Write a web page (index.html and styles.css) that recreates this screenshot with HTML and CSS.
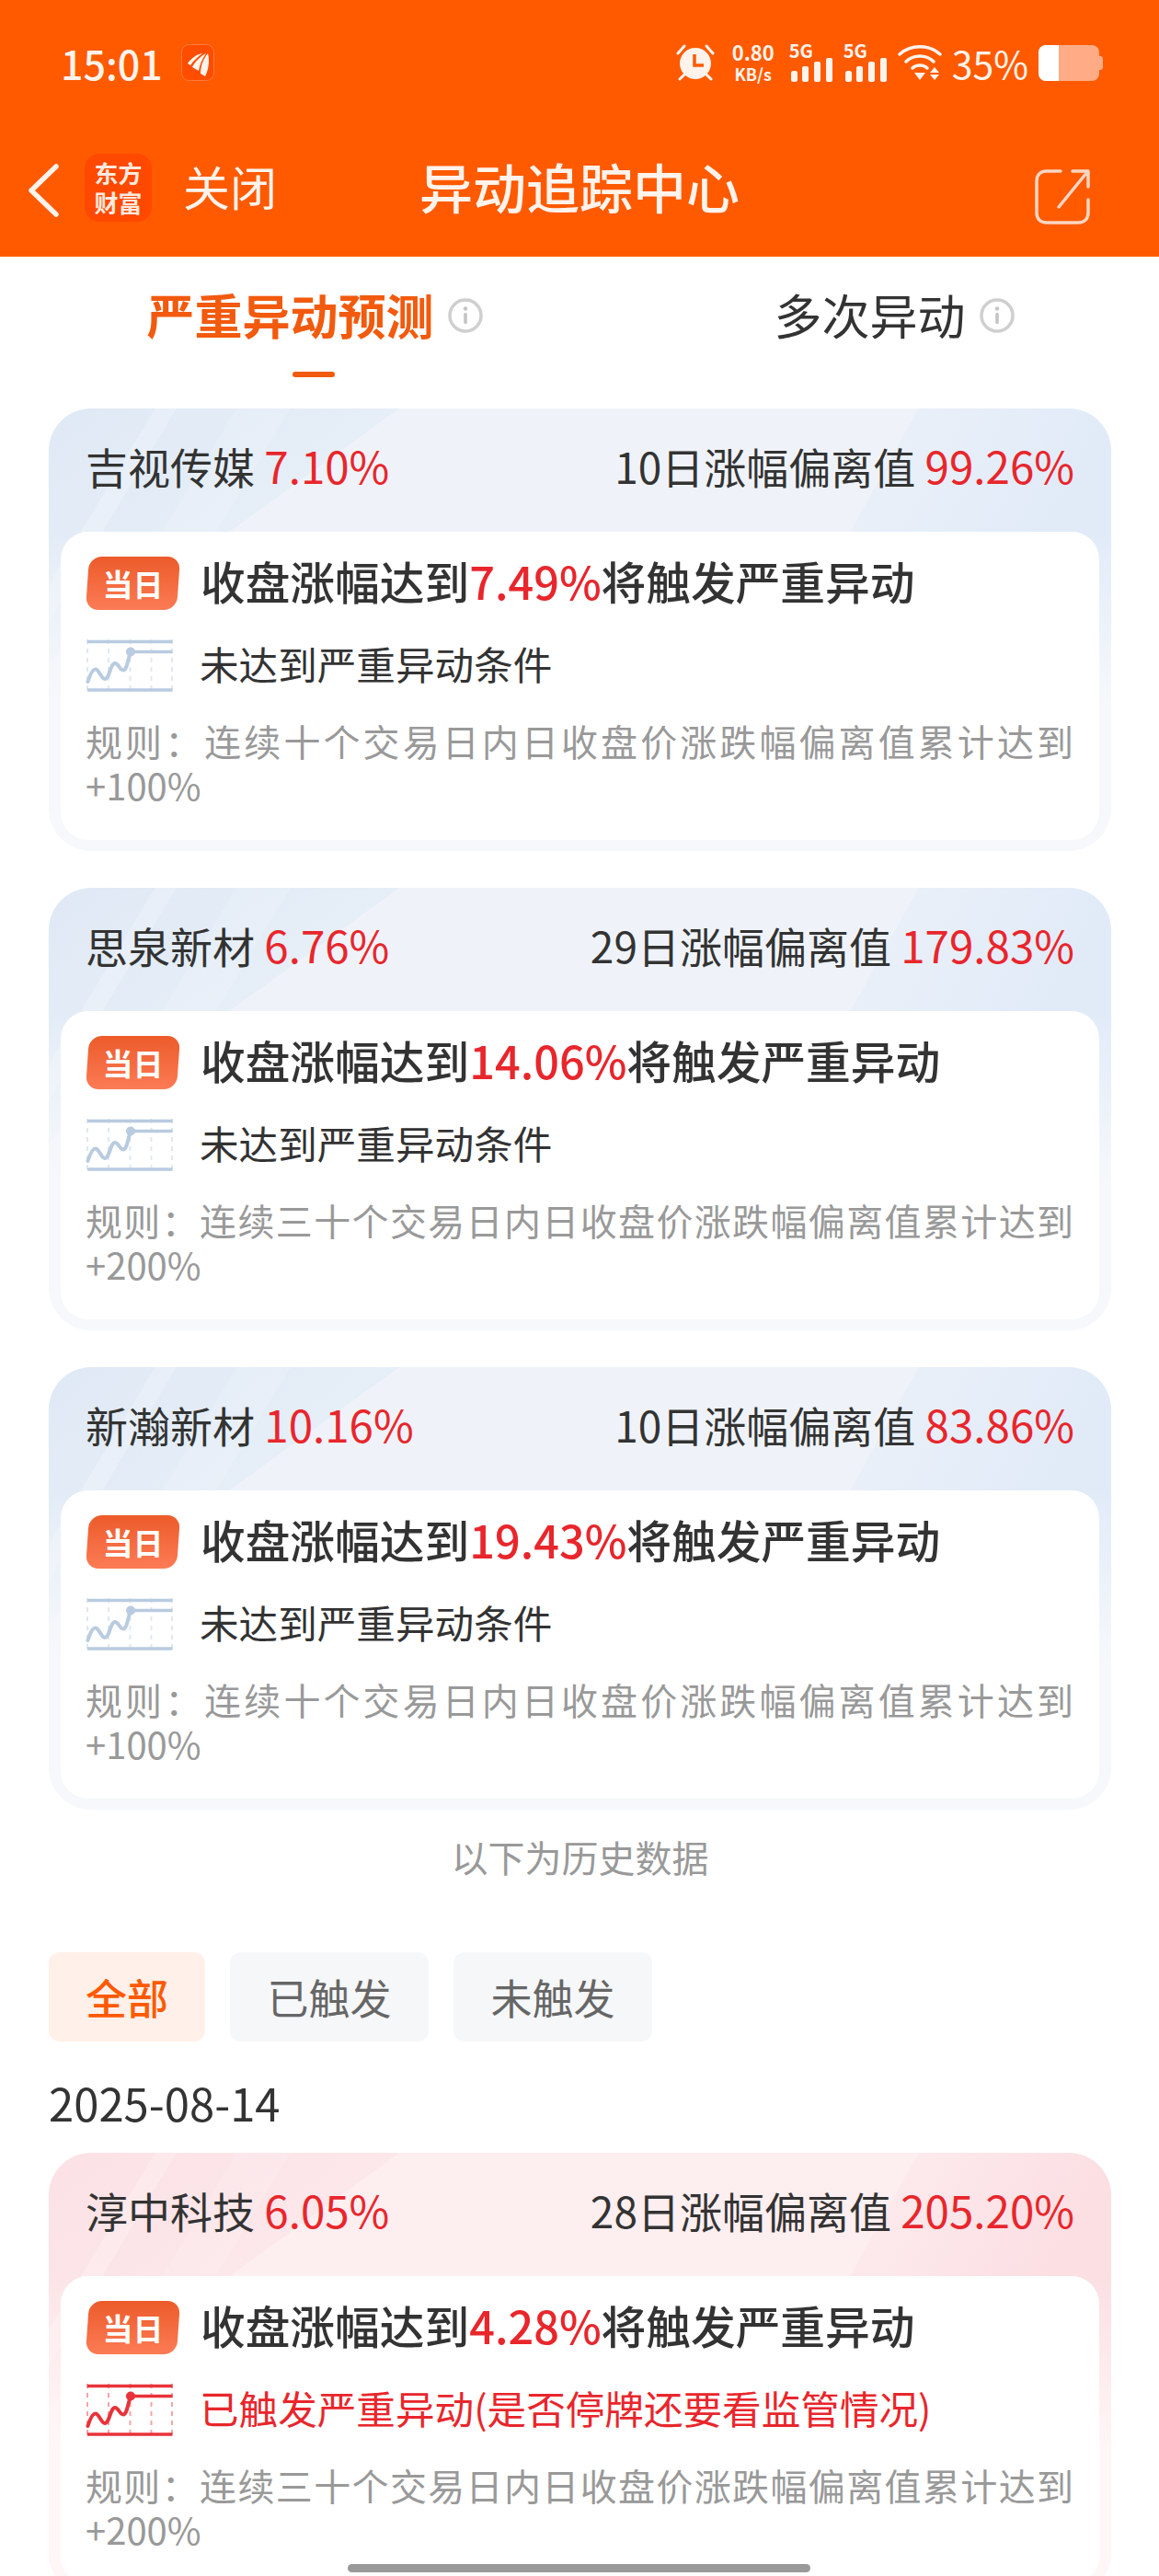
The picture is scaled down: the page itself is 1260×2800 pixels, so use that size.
FILE: index.html
```html
<!DOCTYPE html>
<html lang="zh-CN">
<head>
  <meta charset="UTF-8" />
  <meta name="viewport" content="width=device-width, initial-scale=1" />
  <title>异动追踪中心</title>
  <link rel="stylesheet" href="styles.css">
</head>
<body>
  <svg class="defs" width="0" height="0">
    <symbol id="chart" viewBox="0 0 96 58">
      <path d="M2 0V58M25 0V58M48.500 0V58M71.500 0V58M94 0V58" class="chart-grid" />
      <path d="M2 2.500H94.500M2 55H94.500M49 13.500H94.500" class="chart-line" />
      <path d="M2.500 46C5 38 8 32 11 32.500C15 33 17 43 21 43C26 43 27 26 32 26C36 26 37 33.500 41 33.500C45 33.500 46 22 49 13.500" class="chart-curve" />
      <circle cx="49" cy="13.500" r="5" class="chart-dot" />
    </symbol>
    <symbol id="info" viewBox="0 0 38 38">
      <circle cx="19" cy="19" r="17" class="info-ring" />
      <circle cx="19" cy="11.500" r="2.200" class="info-mark" />
      <rect x="17.200" y="16" width="3.600" height="12" rx="1.500" class="info-mark" />
    </symbol>
    <symbol id="signal" viewBox="0 0 45 26">
      <rect x="0" y="14" width="7" height="12" rx="2.500" />
      <rect x="12" y="9" width="7" height="17" rx="2" />
      <rect x="25" y="4" width="7" height="22" rx="2" />
      <rect x="38" y="0" width="7" height="26" rx="2" />
    </symbol>
  </svg>

  <header>
    <div class="status-bar">
      <div class="status-left">
        <span class="time">15:01</span>
        <svg class="app-badge" viewBox="0 0 36 40">
          <rect x="0.500" y="0.500" width="35" height="39" rx="8" fill="#ff4d00" stroke="#ff7a3d" />
          <path d="M7 21C11 15 17 11 23 10C18 14 13 18 10 23ZM12 25C15 19 21 13 27 10C23 16 20 22 19 29ZM21 32C21 24 24 16 29 10C31 18 30 27 26 35Z" fill="#fff3ec" />
        </svg>
      </div>
      <div class="status-right">
        <svg class="alarm" viewBox="0 0 42 40">
          <path d="M2 10L9 2M40 10L33 2M9 33L4 38M33 33L38 38" stroke="#fff3ec" stroke-width="3" stroke-linecap="round" fill="none" />
          <circle cx="21" cy="21" r="17" fill="#fff3ec" />
          <path d="M20 11V23H30" stroke="#ff5a00" stroke-width="3.500" fill="none" />
        </svg>
        <div class="speed"><span>0.80</span><small>KB/s</small></div>
        <div class="net"><span>5G</span><svg class="bars"><use href="#signal" /></svg></div>
        <div class="net"><span>5G</span><svg class="bars"><use href="#signal" /></svg></div>
        <svg class="wifi" viewBox="0 0 48 38">
          <path d="M2 10C14 -1 34 -1 46 10M9 18C17 10 31 10 39 18M16 25C20 21 28 21 32 25" stroke="#fff3ec" stroke-width="3.500" stroke-linecap="round" fill="none" />
          <path d="M18 30H30L24 38ZM35 30L40 24L45 30ZM35 32H45L40 38Z" fill="#fff3ec" />
        </svg>
        <span class="battery-text">35%</span>
        <div class="battery"><div class="battery-level"></div></div>
      </div>
    </div>
    <div class="topbar">
      <div class="topbar-left">
        <svg class="back" viewBox="0 0 34 58">
          <path d="M31 3L4 29L31 55" stroke="#fff3ec" stroke-width="5.500" stroke-linecap="round" stroke-linejoin="round" fill="none" />
        </svg>
        <div class="logo">东方<br>财富</div>
        <span class="close">关闭</span>
      </div>
      <h1>异动追踪中心</h1>
      <svg class="share" viewBox="0 0 60 60">
        <path d="M28 2H13C6 2 2 6 2 13V47C2 54 6 58 13 58H47C54 58 58 54 58 47V33" stroke="#ffd6c2" stroke-width="3.500" stroke-linecap="round" fill="none" />
        <path d="M41 2H58V19M57 3L26 41" stroke="#ffd6c2" stroke-width="3.500" stroke-linecap="round" stroke-linejoin="round" fill="none" />
      </svg>
    </div>
  </header>

  <nav class="tabs">
    <a class="tab active">严重异动预测<svg class="info"><use href="#info" /></svg></a>
    <a class="tab">多次异动<svg class="info"><use href="#info" /></svg></a>
  </nav>

  <main>
    <section class="card">
      <div class="card-head">
        <div>吉视传媒 <span class="red">7.10%</span></div>
        <div>10日涨幅偏离值 <span class="red">99.26%</span></div>
      </div>
      <div class="card-body">
        <div class="row-title"><span class="badge">当日</span><div>收盘涨幅达到<span class="red">7.49%</span>将触发严重异动</div></div>
        <div class="row-state"><svg class="chart"><use href="#chart" /></svg><div>未达到严重异动条件</div></div>
        <p class="rule">规则：连续十个交易日内日收盘价涨跌幅偏离值累计达到+100%</p>
      </div>
    </section>

    <section class="card">
      <div class="card-head">
        <div>思泉新材 <span class="red">6.76%</span></div>
        <div>29日涨幅偏离值 <span class="red">179.83%</span></div>
      </div>
      <div class="card-body">
        <div class="row-title"><span class="badge">当日</span><div>收盘涨幅达到<span class="red">14.06%</span>将触发严重异动</div></div>
        <div class="row-state"><svg class="chart"><use href="#chart" /></svg><div>未达到严重异动条件</div></div>
        <p class="rule">规则：连续三十个交易日内日收盘价涨跌幅偏离值累计达到+200%</p>
      </div>
    </section>

    <section class="card">
      <div class="card-head">
        <div>新瀚新材 <span class="red">10.16%</span></div>
        <div>10日涨幅偏离值 <span class="red">83.86%</span></div>
      </div>
      <div class="card-body">
        <div class="row-title"><span class="badge">当日</span><div>收盘涨幅达到<span class="red">19.43%</span>将触发严重异动</div></div>
        <div class="row-state"><svg class="chart"><use href="#chart" /></svg><div>未达到严重异动条件</div></div>
        <p class="rule">规则：连续十个交易日内日收盘价涨跌幅偏离值累计达到+100%</p>
      </div>
    </section>

    <div class="history-note">以下为历史数据</div>

    <div class="filters">
      <a class="filter active">全部</a>
      <a class="filter">已触发</a>
      <a class="filter">未触发</a>
    </div>

    <div class="date">2025-08-14</div>

    <section class="card triggered">
      <div class="card-head">
        <div>淳中科技 <span class="red">6.05%</span></div>
        <div>28日涨幅偏离值 <span class="red">205.20%</span></div>
      </div>
      <div class="card-body">
        <div class="row-title"><span class="badge">当日</span><div>收盘涨幅达到<span class="red">4.28%</span>将触发严重异动</div></div>
        <div class="row-state red"><svg class="chart"><use href="#chart" /></svg><div>已触发严重异动(是否停牌还要看监管情况)</div></div>
        <p class="rule">规则：连续三十个交易日内日收盘价涨跌幅偏离值累计达到+200%</p>
      </div>
    </section>
  </main>

  <div class="home-bar"></div>
</body>
</html>
```

FILE: styles.css
```css
html, body {
  margin: 0;
  height: 2800px;
  overflow: hidden;
}
body {
  position: relative;
  font-family: "Noto Sans CJK SC", "Noto Sans", sans-serif;
  background-color: #fff;
  color: #333;
}
.defs {
  position: absolute;
}
.red {
  color: #e8262c;
}

/* header */
header {
  background-color: #ff5a00;
  height: 279px;
  color: #fff3ec;
}
.status-bar {
  height: 136px;
  padding: 0 65px 0 66px;
  display: flex;
  justify-content: space-between;
  align-items: center;
}
.status-left {
  display: flex;
  align-items: center;
  gap: 20px;
}
.time {
  font-size: 43px;
  font-weight: 500;
  line-height: 1;
}
.app-badge {
  width: 36px;
  height: 40px;
}
.status-right {
  display: flex;
  align-items: center;
}
.alarm {
  width: 42px;
  height: 40px;
}
.speed {
  width: 52px;
  margin-left: 16px;
  display: flex;
  flex-direction: column;
  align-items: center;
  font-size: 22px;
  font-weight: 700;
  line-height: 22px;
}
.speed small {
  font-size: 18px;
  margin-top: 2px;
}
.net {
  position: relative;
  width: 45px;
  height: 42px;
  margin-left: 15px;
  font-size: 20px;
  font-weight: 700;
  line-height: 16px;
}
.net + .net {
  margin-left: 14px;
}
.net span {
  display: block;
  margin-left: -2px;
}
.bars {
  display: block;
  width: 45px;
  height: 26px;
  fill: #fff3ec;
}
.wifi {
  width: 48px;
  height: 38px;
  margin-left: 12px;
}
.battery-text {
  margin-left: 11px;
  font-size: 41px;
  line-height: 1;
}
.battery {
  width: 66px;
  height: 39px;
  margin-left: 11px;
  background-color: #ffac86;
  border-radius: 8px;
  position: relative;
  overflow: visible;
}
.battery::after {
  content: "";
  position: absolute;
  right: -4px;
  top: 12px;
  width: 4px;
  height: 15px;
  border-radius: 0 3px 3px 0;
  background-color: #ffac86;
}
.battery-level {
  width: 22px;
  height: 100%;
  background-color: #fff;
  border-radius: 8px 0 0 8px;
}
.topbar {
  height: 143px;
  padding: 0 30px 12px;
  box-sizing: border-box;
  display: grid;
  grid-template-columns: 1fr auto 1fr;
  align-items: center;
}
.topbar-left {
  display: flex;
  align-items: center;
}
.back {
  width: 34px;
  height: 58px;
  margin-top: 10px;
}
.logo {
  width: 73px;
  height: 74px;
  margin-left: 28px;
  margin-top: 4px;
  border-radius: 16px;
  background-color: #ff4800;
  text-align: center;
  font-size: 26px;
  font-weight: 700;
  line-height: 32px;
  padding-top: 5px;
  box-sizing: border-box;
  color: #ffeadf;
}
.close {
  margin-left: 34px;
  font-size: 51px;
}
h1 {
  margin: 0;
  font-size: 58px;
  font-weight: 500;
  line-height: 1;
}
.share {
  justify-self: end;
  width: 60px;
  height: 60px;
  margin-top: 24px;
  margin-right: 45px;
}

/* tabs */
.tabs {
  display: grid;
  grid-template-columns: 1fr 1fr;
  height: 165px;
}
.tab {
  position: relative;
  display: flex;
  justify-content: center;
  align-items: center;
  height: 124px;
  padding-left: 54px;
  font-size: 52px;
  color: #333;
}
.tab.active {
  color: #f25a0e;
  font-weight: 700;
}
.tab.active::after {
  content: "";
  position: absolute;
  left: 318px;
  bottom: -7px;
  width: 46px;
  height: 6px;
  border-radius: 3px;
  background-color: #f25a0e;
}
.info {
  width: 38px;
  height: 38px;
  margin-left: 15px;
  margin-top: 4px;
}
.info-ring {
  fill: none;
  stroke: #cfcfcf;
  stroke-width: 3.500;
}
.info-mark {
  fill: #c4c4c4;
}

/* cards */
main {
  padding: 0 52px 0 53px;
}
.card {
  --base: #eff3f9;
  --fade: #f6f8fb;
  --wedge-a: #dfe9f5;
  --wedge-b: #e6eef7;
  --right-a: rgba(224, 234, 247, .4);
  --right-b: #e1ebf8;
  height: 481px;
  margin-bottom: 40px;
  padding: 0 13px 12px;
  box-sizing: border-box;
  border-radius: 46px;
  overflow: hidden;
  background:
    linear-gradient(180deg, transparent 134px, var(--fade) 320px),
    linear-gradient(121deg, transparent 99px, rgba(255, 255, 255, .22) 99px 119px, transparent 119px 175px, rgba(255, 255, 255, .12) 175px 225px, transparent 225px),
    linear-gradient(144deg, var(--wedge-a) 0, var(--wedge-b) 224px, transparent 224px),
    linear-gradient(119deg, transparent 827px, var(--right-a) 827px, var(--right-b) 1010px),
    var(--base);
}
.card.triggered {
  --base: #fdeef0;
  --fade: #fff6f7;
  --wedge-a: #fbe1e5;
  --wedge-b: #fce7ea;
  --right-a: rgba(252, 226, 230, .4);
  --right-b: #fbdfe3;
}
.card-head {
  height: 134px;
  padding: 0 27px 10px 27px;
  box-sizing: border-box;
  display: flex;
  justify-content: space-between;
  align-items: center;
  font-size: 46px;
  line-height: 60px;
}
.card-head .red {
  font-size: 47.500px;
}
.card-body {
  height: 335px;
  padding: 27px 28px 0 27px;
  box-sizing: border-box;
  background-color: #fff;
  border-radius: 30px;
}
.row-title {
  display: flex;
  align-items: center;
  height: 58px;
  font-size: 48.700px;
  font-weight: 500;
  line-height: 58px;
}
.row-title div {
  margin-top: -6px;
}
.badge {
  position: relative;
  width: 103px;
  margin-right: 22px;
  text-align: center;
  font-size: 33px;
  font-weight: 700;
  color: #fff;
  z-index: 0;
}
.badge::before {
  content: "";
  position: absolute;
  z-index: -1;
  inset: 0 2px;
  transform: skewX(-4deg);
  border-radius: 14px;
  background: linear-gradient(180deg, #ec5b2a, #fc7b55);
}
.row-state {
  display: flex;
  align-items: center;
  height: 58px;
  margin-top: 32px;
  font-size: 42.600px;
  line-height: 58px;
}
.row-state div {
  margin-top: -6px;
}
.chart {
  width: 96px;
  height: 58px;
  margin-right: 28px;
  color: #b9cbe0;
}
.row-state.red .chart {
  color: #e8333a;
}
.chart-grid {
  fill: none;
  stroke: currentColor;
  stroke-opacity: .45;
  stroke-width: 2;
  stroke-dasharray: 5 5;
}
.chart-line {
  fill: none;
  stroke: currentColor;
  stroke-width: 3.500;
}
.chart-curve {
  fill: none;
  stroke: currentColor;
  stroke-width: 4;
  stroke-linecap: round;
}
.chart-dot {
  fill: currentColor;
}
.rule {
  margin: 28px 0 0;
  font-size: 40px;
  line-height: 48px;
  color: #999;
  text-align: justify;
}

/* history */
.history-note {
  margin-top: -19px;
  height: 60px;
  line-height: 60px;
  text-align: center;
  font-size: 40px;
  color: #999;
}
.filters {
  display: flex;
  gap: 27px;
  margin-top: 74px;
}
.filter {
  height: 97px;
  line-height: 97px;
  padding: 0 40.500px;
  border-radius: 12px;
  background-color: #f6f7f9;
  font-size: 45px;
  color: #666;
}
.filter.active {
  padding: 0 40px;
  background-color: #fff0e9;
  color: #ff5a00;
  font-weight: 500;
}
.date {
  margin-top: 32px;
  margin-bottom: 21px;
  font-size: 49px;
  line-height: 68px;
}
.home-bar {
  position: absolute;
  left: 378px;
  top: 2787px;
  width: 503px;
  height: 9px;
  border-radius: 5px;
  background-color: #999;
}
```
